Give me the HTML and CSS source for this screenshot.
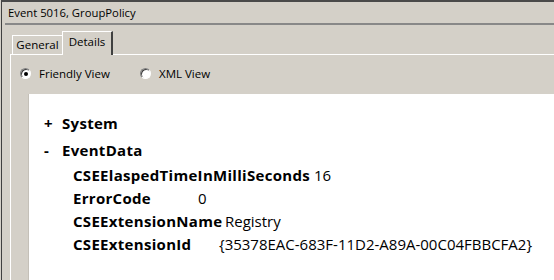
FILE: index.html
```html
<!DOCTYPE html>
<html>
<head>
<meta charset="utf-8">
<link rel="stylesheet" href="styles.css">
</head>
<body>
<div class="frame">
  <div class="title">Event 5016, GroupPolicy</div>
  <div class="sep"></div>
  <div class="tabs">
    <div class="tab">General</div>
    <div class="tab tab-active">Details</div>
  </div>
  <div class="panel">
    <div class="radios">
      <label class="radio"><span class="circle checked"></span>Friendly View</label>
      <label class="radio"><span class="circle"></span>XML View</label>
    </div>
    <div class="content">
      <div class="node"><span class="toggle">+</span><span class="name">System</span></div>
      <div class="node"><span class="toggle">-</span><span class="name">EventData</span></div>
      <div class="data">
        <div class="row"><span class="key k1">CSEElaspedTimeInMilliSeconds</span><span class="val">16</span></div>
        <div class="row"><span class="key k2">ErrorCode</span><span class="val">0</span></div>
        <div class="row"><span class="key k3">CSEExtensionName</span><span class="val">Registry</span></div>
        <div class="row"><span class="key k4">CSEExtensionId</span><span class="val">{35378EAC-683F-11D2-A89A-00C04FBBCFA2}</span></div>
      </div>
    </div>
  </div>
</div>
</body>
</html>
```

FILE: styles.css
```css
html, body {
  margin: 0;
  height: 100%;
  overflow: hidden;
}
body {
  background: #d4d0c8;
  font-family: "Open Sans", "Noto Sans", sans-serif;
  color: #000;
}
.frame {
  margin-left: 1px;
  border-left: 1px solid #404040;
  border-top: 2px solid #4a4a4a;
  height: 100%;
  box-sizing: border-box;
  display: flex;
  flex-direction: column;
}
.title {
  height: 21px;
  line-height: 21px;
  padding-left: 6px;
  font-size: 11.3px;
}
.sep {
  margin-left: 3px;
  height: 2px;
  background: #888888;
}
.tabs {
  display: flex;
  align-items: flex-end;
  height: 29px;
  padding-left: 10px;
  box-sizing: border-box;
}
.tab {
  width: 50px;
  height: 19px;
  border-left: 1px solid #ffffff;
  border-top: 1px solid #ffffff;
  font-size: 11.5px;
  line-height: 18px;
  text-align: center;
  box-sizing: border-box;
  background: #d4d0c8;
}
.tab-active {
  position: relative;
  width: 51px;
  height: 24px;
  margin-bottom: -1px;
  border-right: 2px solid #404040;
  line-height: 19px;
  z-index: 1;
  padding-bottom: 3px;
}
.panel {
  margin-left: 8px;
  border-left: 1px solid #ffffff;
  border-top: 1px solid #ffffff;
  flex: 1;
  display: flex;
  flex-direction: column;
}
.radios {
  display: flex;
  padding-top: 12px;
  padding-left: 9px;
  height: 13px;
}
.radio {
  display: flex;
  align-items: center;
  gap: 8px;
  font-size: 11.5px;
  line-height: 13px;
  width: 120px;
}
.circle {
  width: 11px;
  height: 11px;
  box-sizing: border-box;
  border-radius: 50%;
  border: 1px solid;
  border-color: #808080 #ffffff #ffffff #808080;
  background: #ffffff;
  box-shadow: inset 1px 1px 0 #404040;
  display: flex;
  align-items: center;
  justify-content: center;
}
.circle.checked::after {
  content: "";
  width: 4px;
  height: 4px;
  border-radius: 50%;
  background: #000;
}
.content {
  margin-top: 14px;
  margin-left: 17px;
  border-left: 1px solid #c4c0b8;
  background: #ffffff;
  flex: 1;
  padding-top: 16px;
  padding-left: 15px;
  font-size: 15px;
}
.node {
  display: flex;
  height: 27px;
  line-height: 27px;
  font-weight: bold;
  letter-spacing: 0.3px;
}
.toggle {
  width: 18px;
  flex-shrink: 0;
}
.data {
  padding-left: 29px;
}
.row {
  display: flex;
  height: 23px;
  line-height: 23px;
  white-space: nowrap;
}
.key {
  font-weight: bold;
  letter-spacing: 0.3px;
  flex-shrink: 0;
}
.k1 { width: 241px; }
.k2 { width: 125px; }
.k3 { width: 152px; }
.k4 { width: 146px; }
.val {
  font-weight: normal;
}
```
